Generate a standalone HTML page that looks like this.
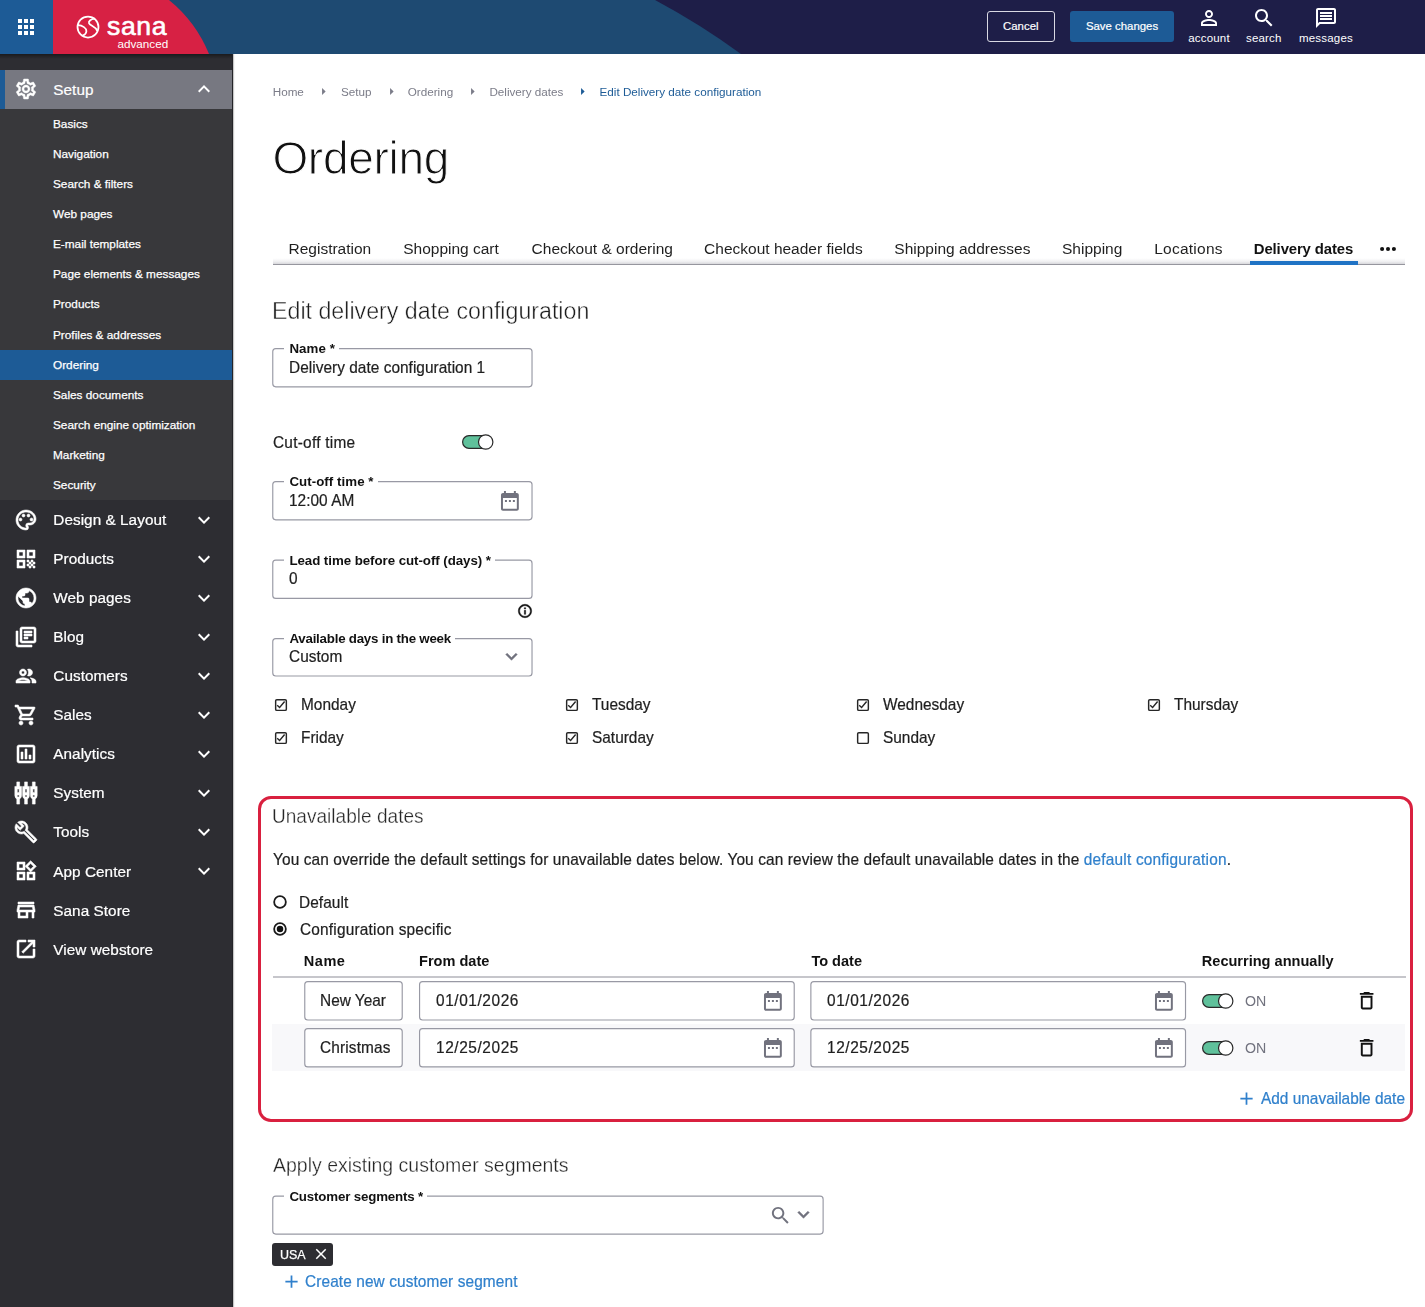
<!DOCTYPE html>
<html lang="en"><head><meta charset="utf-8"><title>Ordering - Edit Delivery date configuration</title>
<style>
*{box-sizing:border-box;margin:0;padding:0}
html,body{width:1425px;height:1307px;overflow:hidden;background:#fff}
body{position:relative;font-family:"Liberation Sans",sans-serif;color:#1f1f1f;font-size:15.4px}
.a,.t,.i{position:absolute}
.t{white-space:nowrap;line-height:20px;display:block}
.lg{position:absolute;background:#fff}
.i{display:block}
a{text-decoration:none;color:inherit}
ul{list-style:none}
button{font-family:inherit;background:none;border:0;color:inherit}
h1,h2,h3{font-weight:400}
header{position:absolute;left:0;top:0;width:1425px;height:54px;overflow:hidden}
nav.side{position:absolute;left:0;top:54px;width:233px;height:1253px}
.sbg{position:absolute;left:0;top:0;width:233px;height:1253px;background:linear-gradient(rgba(0,0,0,.42),rgba(0,0,0,0) 5px),#2d2d32;border-right:1px solid #242428;box-shadow:1px 0 1px rgba(0,0,0,.22)}
main{position:absolute;left:0;top:0;width:1425px;height:1307px}
main,nav.side,header{will-change:opacity}
</style></head>
<body>
<main>
<nav class="crumbs">
<a class="t" style="top:85px;font-size:11.7px;line-height:13px;left:272.7px;color:#7b7c88;" href="#">Home</a>
<svg class="i" viewBox="0 0 24 24" style="left:315.1px;top:83.2px;width:17px;height:17px;fill:#7b7c88;"><path d="M10 17l5-5-5-5v10z"/></svg>
<a class="t" style="top:85px;font-size:11.7px;line-height:13px;left:340.9px;color:#7b7c88;" href="#">Setup</a>
<svg class="i" viewBox="0 0 24 24" style="left:382.5px;top:83.2px;width:17px;height:17px;fill:#7b7c88;"><path d="M10 17l5-5-5-5v10z"/></svg>
<a class="t" style="top:85px;font-size:11.7px;line-height:13px;left:407.7px;color:#7b7c88;" href="#">Ordering</a>
<svg class="i" viewBox="0 0 24 24" style="left:463.9px;top:83.2px;width:17px;height:17px;fill:#7b7c88;"><path d="M10 17l5-5-5-5v10z"/></svg>
<a class="t" style="top:85px;font-size:11.7px;line-height:13px;left:489.4px;color:#7b7c88;" href="#">Delivery dates</a>
<svg class="i" viewBox="0 0 24 24" style="left:573.5px;top:83.2px;width:17px;height:17px;fill:#1d5b96;"><path d="M10 17l5-5-5-5v10z"/></svg>
<span class="t" style="top:85px;font-size:11.7px;line-height:13px;left:599.5px;color:#1d5b96;">Edit Delivery date configuration</span>
</nav>
<h1 class="t" style="top:132px;font-size:46px;line-height:52px;left:272.4px;color:#111;letter-spacing:-0.3px;-webkit-text-stroke:1.050px #fff;">Ordering</h1>
<div class="a" style="left:272.5px;top:232px;width:1132.5px;height:32.6px;border-bottom:1px solid #96969e;background:linear-gradient(#fff 0,#fff 82%,#f0f0f2 92%,#d8d8dc 100%)"></div>
<a class="t" style="top:240px;font-size:15.5px;line-height:17px;left:288.5px;color:#1f1f1f;" href="#">Registration</a>
<a class="t" style="top:240px;font-size:15.5px;line-height:17px;left:403.2px;color:#1f1f1f;" href="#">Shopping cart</a>
<a class="t" style="top:240px;font-size:15.5px;line-height:17px;left:531.6px;color:#1f1f1f;" href="#">Checkout &amp; ordering</a>
<a class="t" style="top:240px;font-size:15.5px;line-height:17px;left:704.1px;color:#1f1f1f;" href="#">Checkout header fields</a>
<a class="t" style="top:240px;font-size:15.5px;line-height:17px;left:894.3px;color:#1f1f1f;" href="#">Shipping addresses</a>
<a class="t" style="top:240px;font-size:15.5px;line-height:17px;left:1062px;color:#1f1f1f;" href="#">Shipping</a>
<a class="t" style="top:240px;font-size:15.5px;line-height:17px;left:1154.2px;color:#1f1f1f;letter-spacing:0.25px;" href="#">Locations</a>
<a class="t" style="top:241px;font-size:14.9px;line-height:16px;left:1253.8px;color:#111;font-weight:700;letter-spacing:-0.12px;" href="#">Delivery dates</a>
<div class="a" style="left:1250.3px;top:260.5px;width:107.6px;height:4px;background:#2073c5"></div>
<svg class="a" style="left:1377.500px;top:244.800px" width="20" height="8" viewBox="0 0 20 8" fill="#111"><circle cx="4.100" cy="4" r="2.050"/><circle cx="10" cy="4" r="2.050"/><circle cx="15.900" cy="4" r="2.050"/></svg>
<h2 class="t" style="top:297px;font-size:24.7px;line-height:27px;left:271.5px;color:#1c1c1c;transform:scaleX(0.94);transform-origin:0 0;-webkit-text-stroke:.45px #fff;">Edit delivery date configuration</h2>
<svg class="a fld" style="left:271px;top:347px" width="263" height="42"><rect x="1.77" y="1.57" width="259.25" height="38.25" rx="3" fill="#fff" stroke="#9899a4" stroke-width="1.15"/></svg>
<div class="lg" style="left:284.2px;top:346px;width:55px;height:6px;"></div>
<label class="t" style="top:341px;font-size:13.3px;line-height:15px;left:289.4px;color:#111;font-weight:700;letter-spacing:0.07px;">Name *</label>
<span class="t" style="top:359px;font-size:15.9px;line-height:17px;left:289.2px;color:#1f1f1f;letter-spacing:0.03px;transform:scaleX(0.97);transform-origin:0 0;-webkit-text-stroke:.22px;">Delivery date configuration 1</span>
<span class="t" style="top:434px;font-size:15.9px;line-height:17px;left:272.6px;color:#1f1f1f;letter-spacing:0.25px;transform:scaleX(0.97);transform-origin:0 0;-webkit-text-stroke:.22px;">Cut-off time</span>
<svg class="a" style="left:461px;top:433px" width="34" height="18" viewBox="0 0 34 18" stroke="#2a2a2a" stroke-width="1.200"><rect x="1.600" y="2.600" width="28.500" height="12.800" rx="6.400" fill="#5fc19b"/><circle cx="24.700" cy="9" r="7.200" fill="#fff"/></svg>
<svg class="a fld" style="left:271px;top:480px" width="263" height="42"><rect x="1.77" y="1.57" width="259.25" height="38.25" rx="3" fill="#fff" stroke="#9899a4" stroke-width="1.15"/></svg>
<div class="lg" style="left:284.2px;top:479px;width:93.5px;height:6px;"></div>
<label class="t" style="top:474px;font-size:13.3px;line-height:15px;left:289.4px;color:#111;font-weight:700;letter-spacing:0.05px;">Cut-off time *</label>
<span class="t" style="top:492px;font-size:15.9px;line-height:17px;left:289.2px;color:#1f1f1f;letter-spacing:0.03px;transform:scaleX(0.97);transform-origin:0 0;-webkit-text-stroke:.22px;">12:00 AM</span>
<svg class="i" viewBox="0 0 24 24" style="left:497.8px;top:489.1px;width:23.8px;height:23.8px;fill:#71727e;"><path d="M9 11H7v2h2v-2zm4 0h-2v2h2v-2zm4 0h-2v2h2v-2zm2-7h-1V2h-2v2H8V2H6v2H5c-1.110 0-1.990.900-1.990 2L3 20c0 1.100.890 2 2 2h14c1.100 0 2-.900 2-2V6c0-1.100-.900-2-2-2zm0 16H5V9h14v11z"/></svg>
<svg class="a fld" style="left:271px;top:558px" width="263" height="42"><rect x="1.77" y="2.18" width="259.25" height="38.25" rx="3" fill="#fff" stroke="#9899a4" stroke-width="1.15"/></svg>
<div class="lg" style="left:284.2px;top:557.6px;width:211px;height:6px;"></div>
<label class="t" style="top:553px;font-size:13.3px;line-height:15px;left:289.4px;color:#111;font-weight:700;letter-spacing:-0.05px;">Lead time before cut-off (days) *</label>
<span class="t" style="top:570px;font-size:15.9px;line-height:17px;left:289.2px;color:#1f1f1f;letter-spacing:0.03px;transform:scaleX(0.97);transform-origin:0 0;-webkit-text-stroke:.22px;">0</span>
<svg class="i" viewBox="0 0 24 24" style="left:516.8px;top:603px;width:16px;height:16px;fill:#111;stroke:#111;stroke-width:.7;"><path d="M11 7h2v2h-2zm0 4h2v6h-2zm1-9C6.480 2 2 6.480 2 12s4.480 10 10 10 10-4.480 10-10S17.520 2 12 2zm0 18c-4.410 0-8-3.590-8-8s3.590-8 8-8 8 3.590 8 8-3.590 8-8 8z"/></svg>
<svg class="a fld" style="left:271px;top:637px" width="263" height="41"><rect x="1.77" y="1.57" width="259.25" height="37.45" rx="3" fill="#fff" stroke="#9899a4" stroke-width="1.15"/></svg>
<div class="lg" style="left:284.2px;top:636px;width:171px;height:6px;"></div>
<label class="t" style="top:631px;font-size:13.3px;line-height:15px;left:289.4px;color:#111;font-weight:700;letter-spacing:-0.22px;">Available days in the week</label>
<span class="t" style="top:648px;font-size:15.9px;line-height:17px;left:289.2px;color:#1f1f1f;letter-spacing:0.03px;transform:scaleX(0.97);transform-origin:0 0;-webkit-text-stroke:.22px;">Custom</span>
<svg class="i" viewBox="0 0 24 24" style="left:499.8px;top:644.9px;width:23px;height:23px;fill:#71727e;stroke:#71727e;stroke-width:.5;"><path d="M16.59 8.59L12 13.17 7.41 8.59 6 10l6 6 6-6z"/></svg>
<svg class="a" style="left:274px;top:697.5px" width="14" height="14" viewBox="0 0 14 14" fill="none" stroke="#262626"><rect x="1.650" y="1.650" width="10.700" height="10.700" rx="1.200" stroke-width="1.450" fill="#fff"/><path d="M3.200 7.200l2.400 2.200 5-5.900" stroke-width="1.400"/></svg>
<label class="t" style="top:696px;font-size:15.9px;line-height:17px;left:300.9px;color:#1f1f1f;transform:scaleX(0.97);transform-origin:0 0;-webkit-text-stroke:.22px;">Monday</label>
<svg class="a" style="left:565.05px;top:697.5px" width="14" height="14" viewBox="0 0 14 14" fill="none" stroke="#262626"><rect x="1.650" y="1.650" width="10.700" height="10.700" rx="1.200" stroke-width="1.450" fill="#fff"/><path d="M3.200 7.200l2.400 2.200 5-5.900" stroke-width="1.400"/></svg>
<label class="t" style="top:696px;font-size:15.9px;line-height:17px;left:591.95px;color:#1f1f1f;transform:scaleX(0.97);transform-origin:0 0;-webkit-text-stroke:.22px;">Tuesday</label>
<svg class="a" style="left:856.1px;top:697.5px" width="14" height="14" viewBox="0 0 14 14" fill="none" stroke="#262626"><rect x="1.650" y="1.650" width="10.700" height="10.700" rx="1.200" stroke-width="1.450" fill="#fff"/><path d="M3.200 7.200l2.400 2.200 5-5.900" stroke-width="1.400"/></svg>
<label class="t" style="top:696px;font-size:15.9px;line-height:17px;left:883px;color:#1f1f1f;transform:scaleX(0.97);transform-origin:0 0;-webkit-text-stroke:.22px;">Wednesday</label>
<svg class="a" style="left:1147.15px;top:697.5px" width="14" height="14" viewBox="0 0 14 14" fill="none" stroke="#262626"><rect x="1.650" y="1.650" width="10.700" height="10.700" rx="1.200" stroke-width="1.450" fill="#fff"/><path d="M3.200 7.200l2.400 2.200 5-5.900" stroke-width="1.400"/></svg>
<label class="t" style="top:696px;font-size:15.9px;line-height:17px;left:1174.05px;color:#1f1f1f;transform:scaleX(0.97);transform-origin:0 0;-webkit-text-stroke:.22px;">Thursday</label>
<svg class="a" style="left:274px;top:730.6px" width="14" height="14" viewBox="0 0 14 14" fill="none" stroke="#262626"><rect x="1.650" y="1.650" width="10.700" height="10.700" rx="1.200" stroke-width="1.450" fill="#fff"/><path d="M3.200 7.200l2.400 2.200 5-5.900" stroke-width="1.400"/></svg>
<label class="t" style="top:729px;font-size:15.9px;line-height:17px;left:300.9px;color:#1f1f1f;transform:scaleX(0.97);transform-origin:0 0;-webkit-text-stroke:.22px;">Friday</label>
<svg class="a" style="left:565.05px;top:730.6px" width="14" height="14" viewBox="0 0 14 14" fill="none" stroke="#262626"><rect x="1.650" y="1.650" width="10.700" height="10.700" rx="1.200" stroke-width="1.450" fill="#fff"/><path d="M3.200 7.200l2.400 2.200 5-5.900" stroke-width="1.400"/></svg>
<label class="t" style="top:729px;font-size:15.9px;line-height:17px;left:591.95px;color:#1f1f1f;transform:scaleX(0.97);transform-origin:0 0;-webkit-text-stroke:.22px;">Saturday</label>
<svg class="a" style="left:856.1px;top:730.6px" width="14" height="14" viewBox="0 0 14 14" fill="none" stroke="#262626"><rect x="1.650" y="1.650" width="10.700" height="10.700" rx="1.200" stroke-width="1.450" fill="#fff"/></svg>
<label class="t" style="top:729px;font-size:15.9px;line-height:17px;left:883px;color:#1f1f1f;transform:scaleX(0.97);transform-origin:0 0;-webkit-text-stroke:.22px;">Sunday</label>
<div class="a" style="left:258px;top:795.5px;width:1155px;height:326px;border:3px solid #d9203f;border-radius:13px"></div>
<h3 class="t" style="top:804px;font-size:20.5px;line-height:23px;left:272.2px;color:#262626;transform:scaleX(0.93);transform-origin:0 0;-webkit-text-stroke:.32px #fff;">Unavailable dates</h3>
<p class="t" style="top:851px;font-size:15.9px;line-height:17px;left:272.8px;color:#1f1f1f;letter-spacing:0.11px;transform:scaleX(0.97);transform-origin:0 0;-webkit-text-stroke:.22px;">You can override the default settings for unavailable dates below. You can review the default unavailable dates in the <a href="#" style="color:#3080cc;letter-spacing:.2px">default configuration</a>.</p>
<svg class="a" style="left:272.35px;top:894.05px" width="16" height="16" viewBox="0 0 16 16" fill="#fff" stroke="#1a1a1a" stroke-width="1.800"><circle cx="8" cy="8" r="5.850"/></svg>
<label class="t" style="top:894px;font-size:15.9px;line-height:17px;left:299.3px;color:#1f1f1f;letter-spacing:0.08px;transform:scaleX(0.97);transform-origin:0 0;-webkit-text-stroke:.22px;">Default</label>
<svg class="a" style="left:272.35px;top:921.3px" width="16" height="16" viewBox="0 0 16 16" fill="#fff" stroke="#1a1a1a" stroke-width="1.800"><circle cx="8" cy="8" r="5.850"/><circle cx="8" cy="8" r="3.250" fill="#111" stroke="none"/></svg>
<label class="t" style="top:921px;font-size:15.9px;line-height:17px;left:300px;color:#1f1f1f;letter-spacing:0.2px;transform:scaleX(0.97);transform-origin:0 0;-webkit-text-stroke:.22px;">Configuration specific</label>
<span class="t" style="top:953px;font-size:14.55px;line-height:16px;left:303.8px;color:#111;font-weight:700;letter-spacing:0.5px;">Name</span>
<span class="t" style="top:953px;font-size:14.55px;line-height:16px;left:419px;color:#111;font-weight:700;">From date</span>
<span class="t" style="top:953px;font-size:14.55px;line-height:16px;left:811.4px;color:#111;font-weight:700;">To date</span>
<span class="t" style="top:953px;font-size:14.55px;line-height:16px;left:1201.8px;color:#111;font-weight:700;">Recurring annually</span>
<div class="a" style="left:272.5px;top:976px;width:1133px;height:2px;background:#c6c6cb"></div>
<div class="a" style="left:272.4px;top:1024px;width:1133px;height:47px;background:#f8f8fa"></div>
<svg class="a fld" style="left:303px;top:980px" width="101" height="42"><rect x="1.77" y="1.57" width="97.45" height="38.45" rx="3" fill="#fff" stroke="#9899a4" stroke-width="1.15"/></svg>
<span class="t" style="top:992px;font-size:15.9px;line-height:17px;left:320.3px;color:#1f1f1f;transform:scaleX(0.97);transform-origin:0 0;-webkit-text-stroke:.22px;">New Year</span>
<svg class="a fld" style="left:418px;top:980px" width="378" height="42"><rect x="1.57" y="1.57" width="374.65" height="38.45" rx="3" fill="#fff" stroke="#9899a4" stroke-width="1.15"/></svg>
<span class="t" style="top:992px;font-size:15.9px;line-height:17px;left:435.6px;color:#1f1f1f;letter-spacing:0.6px;transform:scaleX(0.97);transform-origin:0 0;-webkit-text-stroke:.22px;">01/01/2026</span>
<svg class="i" viewBox="0 0 24 24" style="left:761px;top:989px;width:23.8px;height:23.8px;fill:#71727e;"><path d="M9 11H7v2h2v-2zm4 0h-2v2h2v-2zm4 0h-2v2h2v-2zm2-7h-1V2h-2v2H8V2H6v2H5c-1.110 0-1.990.900-1.990 2L3 20c0 1.100.890 2 2 2h14c1.100 0 2-.900 2-2V6c0-1.100-.900-2-2-2zm0 16H5V9h14v11z"/></svg>
<svg class="a fld" style="left:809px;top:980px" width="379" height="42"><rect x="1.87" y="1.57" width="374.65" height="38.45" rx="3" fill="#fff" stroke="#9899a4" stroke-width="1.15"/></svg>
<span class="t" style="top:992px;font-size:15.9px;line-height:17px;left:826.9px;color:#1f1f1f;letter-spacing:0.6px;transform:scaleX(0.97);transform-origin:0 0;-webkit-text-stroke:.22px;">01/01/2026</span>
<svg class="i" viewBox="0 0 24 24" style="left:1152.3px;top:989px;width:23.8px;height:23.8px;fill:#71727e;"><path d="M9 11H7v2h2v-2zm4 0h-2v2h2v-2zm4 0h-2v2h2v-2zm2-7h-1V2h-2v2H8V2H6v2H5c-1.110 0-1.990.900-1.990 2L3 20c0 1.100.890 2 2 2h14c1.100 0 2-.900 2-2V6c0-1.100-.900-2-2-2zm0 16H5V9h14v11z"/></svg>
<svg class="a" style="left:1200.9px;top:992px" width="34" height="18" viewBox="0 0 34 18" stroke="#2a2a2a" stroke-width="1.200"><rect x="1.600" y="2.600" width="28.500" height="12.800" rx="6.400" fill="#5fc19b"/><circle cx="24.700" cy="9" r="7.200" fill="#fff"/></svg>
<span class="t" style="top:993px;font-size:14.2px;line-height:16px;left:1244.9px;color:#71727e;">ON</span>
<svg class="i" viewBox="0 0 24 24" style="left:1354.95px;top:988.65px;width:23.3px;height:23.3px;fill:#111;"><path d="M6 19c0 1.100.900 2 2 2h8c1.100 0 2-.900 2-2V7H6v12zM8 9h8v10H8V9zm7.500-5l-1-1h-5l-1 1H5v2h14V4z"/></svg>
<svg class="a fld" style="left:303px;top:1027px" width="101" height="42"><rect x="1.77" y="1.57" width="97.45" height="38.35" rx="3" fill="#fff" stroke="#9899a4" stroke-width="1.15"/></svg>
<span class="t" style="top:1039px;font-size:15.9px;line-height:17px;left:320.3px;color:#1f1f1f;letter-spacing:0.14px;transform:scaleX(0.97);transform-origin:0 0;-webkit-text-stroke:.22px;">Christmas</span>
<svg class="a fld" style="left:418px;top:1027px" width="378" height="42"><rect x="1.57" y="1.57" width="374.65" height="38.35" rx="3" fill="#fff" stroke="#9899a4" stroke-width="1.15"/></svg>
<span class="t" style="top:1039px;font-size:15.9px;line-height:17px;left:435.6px;color:#1f1f1f;letter-spacing:0.6px;transform:scaleX(0.97);transform-origin:0 0;-webkit-text-stroke:.22px;">12/25/2025</span>
<svg class="i" viewBox="0 0 24 24" style="left:761px;top:1036px;width:23.8px;height:23.8px;fill:#71727e;"><path d="M9 11H7v2h2v-2zm4 0h-2v2h2v-2zm4 0h-2v2h2v-2zm2-7h-1V2h-2v2H8V2H6v2H5c-1.110 0-1.990.900-1.990 2L3 20c0 1.100.890 2 2 2h14c1.100 0 2-.900 2-2V6c0-1.100-.900-2-2-2zm0 16H5V9h14v11z"/></svg>
<svg class="a fld" style="left:809px;top:1027px" width="379" height="42"><rect x="1.87" y="1.57" width="374.65" height="38.35" rx="3" fill="#fff" stroke="#9899a4" stroke-width="1.15"/></svg>
<span class="t" style="top:1039px;font-size:15.9px;line-height:17px;left:826.9px;color:#1f1f1f;letter-spacing:0.6px;transform:scaleX(0.97);transform-origin:0 0;-webkit-text-stroke:.22px;">12/25/2025</span>
<svg class="i" viewBox="0 0 24 24" style="left:1152.3px;top:1036px;width:23.8px;height:23.8px;fill:#71727e;"><path d="M9 11H7v2h2v-2zm4 0h-2v2h2v-2zm4 0h-2v2h2v-2zm2-7h-1V2h-2v2H8V2H6v2H5c-1.110 0-1.990.900-1.990 2L3 20c0 1.100.890 2 2 2h14c1.100 0 2-.900 2-2V6c0-1.100-.900-2-2-2zm0 16H5V9h14v11z"/></svg>
<svg class="a" style="left:1200.9px;top:1039px" width="34" height="18" viewBox="0 0 34 18" stroke="#2a2a2a" stroke-width="1.200"><rect x="1.600" y="2.600" width="28.500" height="12.800" rx="6.400" fill="#5fc19b"/><circle cx="24.700" cy="9" r="7.200" fill="#fff"/></svg>
<span class="t" style="top:1040px;font-size:14.2px;line-height:16px;left:1244.9px;color:#71727e;">ON</span>
<svg class="i" viewBox="0 0 24 24" style="left:1354.95px;top:1035.65px;width:23.3px;height:23.3px;fill:#111;"><path d="M6 19c0 1.100.900 2 2 2h8c1.100 0 2-.900 2-2V7H6v12zM8 9h8v10H8V9zm7.500-5l-1-1h-5l-1 1H5v2h14V4z"/></svg>
<svg class="i" viewBox="0 0 24 24" style="left:1236.1px;top:1088.3px;width:21px;height:21px;fill:#3080cc;"><path d="M19 13h-6v6h-2v-6H5v-2h6V5h2v6h6v2z"/></svg>
<a class="t" style="top:1090px;font-size:15.9px;line-height:17px;left:1261px;color:#3080cc;transform:scaleX(0.97);transform-origin:0 0;-webkit-text-stroke:.22px;" href="#">Add unavailable date</a>
<h3 class="t" style="top:1153px;font-size:20.5px;line-height:23px;left:273px;color:#262626;transform:scaleX(0.95);transform-origin:0 0;-webkit-text-stroke:.32px #fff;">Apply existing customer segments</h3>
<svg class="a fld" style="left:271px;top:1194px" width="554" height="42"><rect x="1.77" y="2.17" width="550.35" height="37.95" rx="3" fill="#fff" stroke="#9899a4" stroke-width="1.15"/></svg>
<div class="lg" style="left:284.2px;top:1193.6px;width:143px;height:6px;"></div>
<label class="t" style="top:1189px;font-size:13.3px;line-height:15px;left:289.4px;color:#111;font-weight:700;letter-spacing:-0.16px;">Customer segments *</label>
<svg class="i" viewBox="0 0 24 24" style="left:769.3px;top:1204px;width:23px;height:23px;fill:#71727e;"><path d="M15.5 14h-.79l-.28-.27C15.41 12.59 16 11.11 16 9.5 16 5.91 13.09 3 9.5 3S3 5.91 3 9.5 5.91 16 9.5 16c1.61 0 3.09-.59 4.23-1.57l.27.28v.79l5 4.99L20.49 19l-4.99-5zm-6 0C7.01 14 5 11.99 5 9.5S7.01 5 9.5 5 14 7.01 14 9.5 11.99 14 9.5 14z"/></svg>
<svg class="i" viewBox="0 0 24 24" style="left:791.6px;top:1202.7px;width:23px;height:23px;fill:#71727e;stroke:#71727e;stroke-width:.5;"><path d="M16.59 8.59L12 13.17 7.41 8.59 6 10l6 6 6-6z"/></svg>
<div class="a" style="left:272.2px;top:1242.5px;width:60.8px;height:23.4px;background:#2d2d32;border-radius:3px"></div>
<span class="t" style="top:1248px;font-size:12.5px;line-height:14px;left:279.9px;color:#fff;-webkit-text-stroke:.25px #fff;">USA</span>
<svg class="i" viewBox="0 0 24 24" style="left:312px;top:1245.3px;width:18px;height:18px;fill:#fff;"><path d="M19 6.410L17.590 5 12 10.590 6.410 5 5 6.410 10.590 12 5 17.590 6.410 19 12 13.410 17.590 19 19 17.590 13.410 12z"/></svg>
<svg class="i" viewBox="0 0 24 24" style="left:280.5px;top:1271.2px;width:21px;height:21px;fill:#3080cc;"><path d="M19 13h-6v6h-2v-6H5v-2h6V5h2v6h6v2z"/></svg>
<a class="t" style="top:1273px;font-size:15.9px;line-height:17px;left:304.6px;color:#3080cc;letter-spacing:0.1px;transform:scaleX(0.97);transform-origin:0 0;-webkit-text-stroke:.22px;" href="#">Create new customer segment</a>
</main>
<nav class="side">
<div class="sbg"></div>
<div class="a" style="left:0px;top:55px;width:232px;height:391px;background:#38383b"></div>
<div class="a" style="left:0px;top:16px;width:232px;height:39px;background:#777881;border-left:5px solid #1d5b96"></div>
<svg class="i" viewBox="0 0 24 24" style="left:14px;top:23px;width:24px;height:24px;fill:#fff;stroke:#fff;stroke-width:.45;"><path d="M19.43 12.98c.04-.32.07-.64.07-.98 0-.34-.03-.66-.07-.98l2.11-1.65c.19-.15.24-.42.12-.64l-2-3.46c-.09-.16-.26-.25-.44-.25-.06 0-.12.01-.17.03l-2.49 1c-.52-.4-1.08-.73-1.69-.98l-.38-2.65C14.46 2.18 14.25 2 14 2h-4c-.25 0-.46.18-.49.42l-.38 2.65c-.61.25-1.17.59-1.69.98l-2.49-1c-.06-.02-.12-.03-.18-.03-.17 0-.34.09-.43.25l-2 3.46c-.13.22-.07.49.12.64l2.11 1.65c-.04.32-.07.65-.07.98 0 .33.03.66.07.98l-2.11 1.65c-.19.15-.24.42-.12.64l2 3.46c.09.16.26.25.44.25.06 0 .12-.01.17-.03l2.49-1c.52.4 1.08.73 1.69.98l.38 2.65c.03.24.24.42.49.42h4c.25 0 .46-.18.49-.42l.38-2.65c.61-.25 1.17-.59 1.69-.98l2.49 1c.06.02.12.03.18.03.17 0 .34-.09.43-.25l2-3.46c.12-.22.07-.49-.12-.64l-2.11-1.65zm-1.98-1.71c.04.31.05.52.05.73 0 .21-.02.43-.05.73l-.14 1.13.89.7 1.08.84-.7 1.21-1.27-.51-1.04-.42-.9.68c-.43.32-.84.56-1.25.73l-1.06.43-.16 1.13-.2 1.35h-1.4l-.19-1.35-.16-1.13-1.06-.43c-.43-.18-.83-.41-1.23-.71l-.91-.7-1.06.43-1.27.51-.7-1.21 1.08-.84.89-.7-.14-1.13c-.03-.31-.05-.54-.05-.74s.02-.43.05-.73l.14-1.13-.89-.7-1.08-.84.7-1.21 1.27.51 1.04.42.9-.68c.43-.32.84-.56 1.25-.73l1.06-.43.16-1.13.2-1.35h1.39l.19 1.35.16 1.13 1.06.43c.43.18.83.41 1.23.71l.91.7 1.06-.43 1.27-.51.7 1.21-1.07.85-.89.7.14 1.13zM12 8c-2.210 0-4 1.790-4 4s1.790 4 4 4 4-1.790 4-4-1.790-4-4-4zm0 6c-1.100 0-2-.900-2-2s.900-2 2-2 2 .900 2 2-.900 2-2 2z"/></svg>
<span class="t" style="top:27px;font-size:15.3px;line-height:17px;left:53.3px;color:#fff;letter-spacing:0.05px;-webkit-text-stroke:.22px #fff;">Setup</span>
<svg class="i" viewBox="0 0 24 24" style="left:191.5px;top:22.7px;width:24px;height:24px;fill:#fff;"><path d="M12 8l-6 6 1.41 1.41L12 10.83l4.59 4.58L18 14z"/></svg>
<div class="a" style="left:0px;top:296px;width:232px;height:30px;background:#1d5b96"></div>
<ul>
<li class="t" style="top:63px;font-size:11.8px;line-height:14px;left:53px;color:#fff;-webkit-text-stroke:.25px #fff;">Basics</li>
<li class="t" style="top:93px;font-size:11.8px;line-height:14px;left:53px;color:#fff;-webkit-text-stroke:.25px #fff;">Navigation</li>
<li class="t" style="top:123px;font-size:11.8px;line-height:14px;left:53px;color:#fff;-webkit-text-stroke:.25px #fff;">Search &amp; filters</li>
<li class="t" style="top:153px;font-size:11.8px;line-height:14px;left:53px;color:#fff;-webkit-text-stroke:.25px #fff;">Web pages</li>
<li class="t" style="top:183px;font-size:11.8px;line-height:14px;left:53px;color:#fff;-webkit-text-stroke:.25px #fff;">E-mail templates</li>
<li class="t" style="top:213px;font-size:11.8px;line-height:14px;left:53px;color:#fff;-webkit-text-stroke:.25px #fff;">Page elements &amp; messages</li>
<li class="t" style="top:243px;font-size:11.8px;line-height:14px;left:53px;color:#fff;-webkit-text-stroke:.25px #fff;">Products</li>
<li class="t" style="top:274px;font-size:11.8px;line-height:14px;left:53px;color:#fff;-webkit-text-stroke:.25px #fff;">Profiles &amp; addresses</li>
<li class="t" style="top:304px;font-size:11.8px;line-height:14px;left:53px;color:#fff;-webkit-text-stroke:.25px #fff;">Ordering</li>
<li class="t" style="top:334px;font-size:11.8px;line-height:14px;left:53px;color:#fff;-webkit-text-stroke:.25px #fff;">Sales documents</li>
<li class="t" style="top:364px;font-size:11.8px;line-height:14px;left:53px;color:#fff;-webkit-text-stroke:.25px #fff;">Search engine optimization</li>
<li class="t" style="top:394px;font-size:11.8px;line-height:14px;left:53px;color:#fff;-webkit-text-stroke:.25px #fff;">Marketing</li>
<li class="t" style="top:424px;font-size:11.8px;line-height:14px;left:53px;color:#fff;-webkit-text-stroke:.25px #fff;">Security</li>
</ul>
<div class="menu">
<svg class="i" viewBox="0 0 24 24" style="left:13.9px;top:453.6px;width:24px;height:24px;fill:#fff;stroke:#fff;stroke-width:.55;stroke-linejoin:round;"><path d="M12 22C6.49 22 2 17.51 2 12S6.49 2 12 2s10 4.04 10 9c0 3.31-2.69 6-6 6h-1.770c-.280 0-.500.220-.500.500 0 .120.050.230.130.330.410.470.640 1.060.640 1.670A2.500 2.500 0 0 1 12 22zm0-18c-4.410 0-8 3.590-8 8s3.590 8 8 8c.280 0 .500-.220.500-.500a.540.540 0 0 0-.140-.350c-.410-.460-.630-1.050-.630-1.650a2.500 2.500 0 0 1 2.500-2.500H16c2.210 0 4-1.790 4-4 0-3.860-3.590-7-8-7z"/><circle cx="6.5" cy="11.5" r="1.5"/><circle cx="9.5" cy="7.5" r="1.5"/><circle cx="14.5" cy="7.5" r="1.5"/><circle cx="17.5" cy="11.5" r="1.5"/></svg>
<a class="t" style="top:457px;font-size:15.3px;line-height:17px;left:53.3px;color:#fff;letter-spacing:0.05px;-webkit-text-stroke:.22px #fff;" href="#">Design &amp; Layout</a>
<svg class="i" viewBox="0 0 24 24" style="left:191.5px;top:453.9px;width:24px;height:24px;fill:#fff;"><path d="M16.59 8.59L12 13.17 7.41 8.59 6 10l6 6 6-6z"/></svg>
<svg class="i" viewBox="0 0 24 24" style="left:13.9px;top:492.66px;width:24px;height:24px;fill:#fff;stroke:#fff;stroke-width:.55;stroke-linejoin:round;"><path d="M3 11h8V3H3v8zm2-6h4v4H5V5zM3 21h8v-8H3v8zm2-6h4v4H5v-4zM13 3v8h8V3h-8zm6 6h-4V5h4v4zM19 19h2v2h-2zM13 13h2v2h-2zM15 15h2v2h-2zM13 17h2v2h-2zM15 19h2v2h-2zM17 17h2v2h-2zM17 13h2v2h-2zM19 15h2v2h-2z"/></svg>
<a class="t" style="top:496px;font-size:15.3px;line-height:17px;left:53.3px;color:#fff;letter-spacing:0.05px;-webkit-text-stroke:.22px #fff;" href="#">Products</a>
<svg class="i" viewBox="0 0 24 24" style="left:191.5px;top:492.96px;width:24px;height:24px;fill:#fff;"><path d="M16.59 8.59L12 13.17 7.41 8.59 6 10l6 6 6-6z"/></svg>
<svg class="i" viewBox="0 0 24 24" style="left:13.9px;top:531.72px;width:24px;height:24px;fill:#fff;stroke:#fff;stroke-width:.55;stroke-linejoin:round;"><path d="M12 2C6.48 2 2 6.48 2 12s4.48 10 10 10 10-4.48 10-10S17.52 2 12 2zm-1 17.930c-3.950-.490-7-3.850-7-7.930 0-.620.080-1.210.210-1.790L9 15v1c0 1.100.900 2 2 2v1.930zm6.900-2.540c-.260-.810-1-1.390-1.900-1.390h-1v-3c0-.550-.450-1-1-1H8v-2h2c.550 0 1-.450 1-1V7h2c1.100 0 2-.900 2-2v-.410c2.930 1.190 5 4.060 5 7.410 0 2.080-.800 3.970-2.100 5.390z"/></svg>
<a class="t" style="top:535px;font-size:15.3px;line-height:17px;left:53.3px;color:#fff;letter-spacing:0.05px;-webkit-text-stroke:.22px #fff;" href="#">Web pages</a>
<svg class="i" viewBox="0 0 24 24" style="left:191.5px;top:532.02px;width:24px;height:24px;fill:#fff;"><path d="M16.59 8.59L12 13.17 7.41 8.59 6 10l6 6 6-6z"/></svg>
<svg class="i" viewBox="0 0 24 24" style="left:13.9px;top:570.78px;width:24px;height:24px;fill:#fff;stroke:#fff;stroke-width:.55;stroke-linejoin:round;"><path d="M4 6H2v14c0 1.100.900 2 2 2h14v-2H4V6zm16-4H8c-1.100 0-2 .900-2 2v12c0 1.100.900 2 2 2h12c1.100 0 2-.900 2-2V4c0-1.100-.900-2-2-2zm0 14H8V4h12v12zM10 9h8v2h-8zm0 3h4v2h-4zm0-6h8v2h-8z"/></svg>
<a class="t" style="top:574px;font-size:15.3px;line-height:17px;left:53.3px;color:#fff;letter-spacing:0.05px;-webkit-text-stroke:.22px #fff;" href="#">Blog</a>
<svg class="i" viewBox="0 0 24 24" style="left:191.5px;top:571.08px;width:24px;height:24px;fill:#fff;"><path d="M16.59 8.59L12 13.17 7.41 8.59 6 10l6 6 6-6z"/></svg>
<svg class="i" viewBox="0 0 24 24" style="left:13.9px;top:609.84px;width:24px;height:24px;fill:#fff;stroke:#fff;stroke-width:.55;stroke-linejoin:round;"><path d="M9 13.750c-2.340 0-7 1.170-7 3.500V19h14v-1.750c0-2.330-4.660-3.500-7-3.500zM4.340 17c.840-.580 2.870-1.250 4.660-1.250s3.820.670 4.660 1.250H4.340zM9 12c1.930 0 3.500-1.570 3.500-3.500S10.930 5 9 5 5.500 6.570 5.500 8.500 7.070 12 9 12zm0-5c.830 0 1.500.670 1.500 1.500S9.830 10 9 10s-1.500-.670-1.500-1.500S8.170 7 9 7zm7.040 6.810c1.160.840 1.960 1.960 1.960 3.440V19h4v-1.750c0-2.020-3.500-3.170-5.960-3.440zM15 12c1.930 0 3.500-1.570 3.500-3.500S16.930 5 15 5c-.540 0-1.040.130-1.500.350.630.890 1 1.980 1 3.150s-.370 2.260-1 3.150c.460.220.960.350 1.500.350z"/></svg>
<a class="t" style="top:613px;font-size:15.3px;line-height:17px;left:53.3px;color:#fff;letter-spacing:0.05px;-webkit-text-stroke:.22px #fff;" href="#">Customers</a>
<svg class="i" viewBox="0 0 24 24" style="left:191.5px;top:610.14px;width:24px;height:24px;fill:#fff;"><path d="M16.59 8.59L12 13.17 7.41 8.59 6 10l6 6 6-6z"/></svg>
<svg class="i" viewBox="0 0 24 24" style="left:13.9px;top:648.9px;width:24px;height:24px;fill:#fff;stroke:#fff;stroke-width:.55;stroke-linejoin:round;"><path d="M15.550 13c.750 0 1.410-.410 1.750-1.030l3.580-6.490A.996.996 0 0 0 20.010 4H5.210l-.940-2H1v2h2l3.600 7.590-1.350 2.440C4.520 15.370 5.480 17 7 17h12v-2H7l1.100-2h7.450zM6.160 6h12.150l-2.760 5H8.530L6.160 6zM7 18c-1.100 0-1.990.900-1.990 2S5.900 22 7 22s2-.900 2-2-.900-2-2-2zm10 0c-1.100 0-1.990.900-1.990 2s.890 2 1.990 2 2-.900 2-2-.900-2-2-2z"/></svg>
<a class="t" style="top:652px;font-size:15.3px;line-height:17px;left:53.3px;color:#fff;letter-spacing:0.05px;-webkit-text-stroke:.22px #fff;" href="#">Sales</a>
<svg class="i" viewBox="0 0 24 24" style="left:191.5px;top:649.2px;width:24px;height:24px;fill:#fff;"><path d="M16.59 8.59L12 13.17 7.41 8.59 6 10l6 6 6-6z"/></svg>
<svg class="i" viewBox="0 0 24 24" style="left:13.9px;top:687.96px;width:24px;height:24px;fill:#fff;stroke:#fff;stroke-width:.55;stroke-linejoin:round;"><path d="M9 17H7v-7h2v7zm4 0h-2V7h2v10zm4 0h-2v-4h2v4zm2 2H5V5h14v14zm0-16H5c-1.100 0-2 .900-2 2v14c0 1.100.900 2 2 2h14c1.100 0 2-.900 2-2V5c0-1.100-.900-2-2-2z"/></svg>
<a class="t" style="top:691px;font-size:15.3px;line-height:17px;left:53.3px;color:#fff;letter-spacing:0.05px;-webkit-text-stroke:.22px #fff;" href="#">Analytics</a>
<svg class="i" viewBox="0 0 24 24" style="left:191.5px;top:688.26px;width:24px;height:24px;fill:#fff;"><path d="M16.59 8.59L12 13.17 7.41 8.59 6 10l6 6 6-6z"/></svg>
<svg class="i" viewBox="0 0 24 24" style="left:13.9px;top:727.02px;width:24px;height:24px;fill:#fff;stroke:#fff;stroke-width:.55;stroke-linejoin:round;"><path d="M2.80 .9h2.800v22.200h-2.800zM10.60 .9h2.800v22.200h-2.800zM18.40 .9h2.800v22.200h-2.800z"/><path d="M0.85 5.400h6.700v9.200a3.350 3.350 0 0 1-6.700 0zM8.65 5.400h6.700v9.200a3.350 3.350 0 0 1-6.700 0zM16.45 5.400h6.700v9.200a3.350 3.350 0 0 1-6.700 0z"/><path fill="#2d2d32" d="M3.30 8h1.800v3.500h-1.800zM3.30 13.900h1.800v2.200h-1.800zM11.10 8h1.800v3.500h-1.800zM11.10 13.900h1.800v2.200h-1.800zM18.90 8h1.800v3.500h-1.800zM18.90 13.900h1.800v2.200h-1.800z"/></svg>
<a class="t" style="top:730px;font-size:15.3px;line-height:17px;left:53.3px;color:#fff;letter-spacing:0.05px;-webkit-text-stroke:.22px #fff;" href="#">System</a>
<svg class="i" viewBox="0 0 24 24" style="left:191.5px;top:727.32px;width:24px;height:24px;fill:#fff;"><path d="M16.59 8.59L12 13.17 7.41 8.59 6 10l6 6 6-6z"/></svg>
<svg class="i" viewBox="0 0 24 24" style="left:13.9px;top:766.08px;width:24px;height:24px;fill:#fff;stroke:#fff;stroke-width:.55;stroke-linejoin:round;"><path d="M22.610 18.990l-9.080-9.080c.930-2.340.450-5.100-1.440-7C9.790.610 6.210.400 3.660 2.260L7.500 6.110 6.080 7.520 2.250 3.690C.390 6.230.600 9.820 2.900 12.110c1.860 1.860 4.570 2.350 6.890 1.480l9.110 9.110c.390.390 1.020.390 1.410 0l2.300-2.300c.400-.380.400-1.010 0-1.410zm-3 1.600l-9.460-9.460c-.610.450-1.290.720-2 .820-1.360.200-2.790-.210-3.830-1.250C3.370 9.760 2.930 8.500 3 7.260l3.090 3.090 4.240-4.240-3.090-3.090c1.240-.070 2.490.370 3.440 1.310 1.080 1.080 1.490 2.570 1.240 3.960-.120.710-.420 1.370-.880 1.960l9.450 9.450-.880.890z"/></svg>
<a class="t" style="top:769px;font-size:15.3px;line-height:17px;left:53.3px;color:#fff;letter-spacing:0.05px;-webkit-text-stroke:.22px #fff;" href="#">Tools</a>
<svg class="i" viewBox="0 0 24 24" style="left:191.5px;top:766.38px;width:24px;height:24px;fill:#fff;"><path d="M16.59 8.59L12 13.17 7.41 8.59 6 10l6 6 6-6z"/></svg>
<svg class="i" viewBox="0 0 24 24" style="left:13.9px;top:805.14px;width:24px;height:24px;fill:#fff;stroke:#fff;stroke-width:.55;stroke-linejoin:round;"><path d="M16.660 4.520l2.830 2.830-2.830 2.830-2.830-2.830 2.830-2.830M9 5v4H5V5h4m10 10v4h-4v-4h4M9 15v4H5v-4h4m7.660-13.310L11 7.340 16.660 13l5.660-5.660-5.660-5.650zM11 3H3v8h8V3zm10 10h-8v8h8v-8zm-10 0H3v8h8v-8z"/></svg>
<a class="t" style="top:809px;font-size:15.3px;line-height:17px;left:53.3px;color:#fff;letter-spacing:0.05px;-webkit-text-stroke:.22px #fff;" href="#">App Center</a>
<svg class="i" viewBox="0 0 24 24" style="left:191.5px;top:805.44px;width:24px;height:24px;fill:#fff;"><path d="M16.59 8.59L12 13.17 7.41 8.59 6 10l6 6 6-6z"/></svg>
<svg class="i" viewBox="0 0 24 24" style="left:13.9px;top:844.2px;width:24px;height:24px;fill:#fff;stroke:#fff;stroke-width:.55;stroke-linejoin:round;"><path d="M18.360 9l.600 3H5.040l.600-3h12.720M20 4H4v2h16V4zm0 3H4l-1 5v2h1v6h10v-6h4v6h2v-6h1v-2l-1-5zM6 18v-4h6v4H6z"/></svg>
<a class="t" style="top:848px;font-size:15.3px;line-height:17px;left:53.3px;color:#fff;letter-spacing:0.05px;-webkit-text-stroke:.22px #fff;" href="#">Sana Store</a>
<svg class="i" viewBox="0 0 24 24" style="left:13.9px;top:883.26px;width:24px;height:24px;fill:#fff;stroke:#fff;stroke-width:.55;stroke-linejoin:round;"><path d="M19 19H5V5h7V3H5c-1.110 0-2 .900-2 2v14c0 1.100.890 2 2 2h14c1.100 0 2-.900 2-2v-7h-2v7zM14 3v2h3.590l-9.830 9.830 1.410 1.410L19 6.410V10h2V3h-7z"/></svg>
<a class="t" style="top:887px;font-size:15.3px;line-height:17px;left:53.3px;color:#fff;letter-spacing:0.05px;-webkit-text-stroke:.22px #fff;" href="#">View webstore</a>
</div>
</nav>
<header>
<div class="a" style="left:0px;top:0px;width:1425px;height:54px;background:#1e1e48"></div>
<svg class="a" style="left:0;top:0" width="760" height="54" viewBox="0 0 760 54"><path fill="#1e4a72" d="M0 0H655Q700 24 741 54H0z"/><path fill="#d72144" d="M53 0H169Q196 22 209 54H53z"/><rect fill="#1d5b96" width="53" height="54"/></svg>
<svg class="i" viewBox="0 0 24 24" style="left:14px;top:14.7px;width:24px;height:24px;fill:#fff;"><path d="M4 8h4V4H4v4zm6 12h4v-4h-4v4zm-6 0h4v-4H4v4zm0-6h4v-4H4v4zm6 0h4v-4h-4v4zm6-10v4h4V4h-4zm-6 4h4V4h-4v4zm6 6h4v-4h-4v4zm0 6h4v-4h-4v4z"/></svg>
<svg class="a" style="left:76.1px;top:15.2px" width="24" height="24" viewBox="0 0 24 24" fill="none" stroke="#fff" stroke-width="1.75" stroke-linecap="round"><circle cx="12" cy="12" r="10.5"/><path d="M18.400 3.700C14.500 4.300 12.300 6.300 13 8.300C13.800 10.600 19.500 11.500 20.900 15.500"/><path d="M2 10.200C6.500 10.300 10.600 13.300 10.400 16.200C10.300 18.200 8.700 19.700 7.300 20.400"/></svg>
<span class="t" style="top:11px;font-size:26.6px;line-height:30px;left:107px;color:#fff;letter-spacing:0.6px;-webkit-text-stroke:.6px #fff;">sana</span>
<span class="t" style="top:37px;font-size:11.7px;line-height:13px;left:117.5px;color:#fff;">advanced</span>
<button class="a" style="left:987px;top:11px;width:68px;height:31px;border:1px solid #d9d9e3;border-radius:3px"></button>
<span class="t" style="top:20px;font-size:11.4px;line-height:12px;left:870.8px;width:300px;text-align:center;color:#fff;-webkit-text-stroke:.2px #fff;">Cancel</span>
<button class="a" style="left:1070px;top:11px;width:104px;height:31px;background:#1d5b96;border-radius:3px"></button>
<span class="t" style="top:20px;font-size:11.4px;line-height:12px;left:972px;width:300px;text-align:center;color:#fff;-webkit-text-stroke:.2px #fff;">Save changes</span>
<svg class="i" viewBox="0 0 24 24" style="left:1197.4px;top:6px;width:24px;height:24px;fill:#fff;"><path d="M12 5.9c1.16 0 2.1.94 2.1 2.1s-.94 2.1-2.1 2.1S9.9 9.16 9.9 8s.94-2.1 2.1-2.1m0 9c2.97 0 6.1 1.46 6.1 2.1v1.1H5.900V17c0-.64 3.130-2.1 6.100-2.1M12 4C9.790 4 8 5.790 8 8s1.790 4 4 4 4-1.790 4-4-1.790-4-4-4zm0 9c-2.670 0-8 1.340-8 4v3h16v-3c0-2.660-5.330-4-8-4z"/></svg>
<span class="t" style="top:32px;font-size:11.5px;line-height:12px;left:1059px;width:300px;text-align:center;color:#fff;letter-spacing:0.2px;">account</span>
<svg class="i" viewBox="0 0 24 24" style="left:1251.7px;top:5.8px;width:24px;height:24px;fill:#fff;"><path d="M15.5 14h-.79l-.28-.27C15.41 12.59 16 11.11 16 9.5 16 5.91 13.09 3 9.5 3S3 5.91 3 9.5 5.91 16 9.5 16c1.61 0 3.09-.59 4.23-1.57l.27.28v.79l5 4.99L20.49 19l-4.99-5zm-6 0C7.01 14 5 11.99 5 9.5S7.01 5 9.5 5 14 7.01 14 9.5 11.99 14 9.5 14z"/></svg>
<span class="t" style="top:32px;font-size:11.5px;line-height:12px;left:1113.8px;width:300px;text-align:center;color:#fff;letter-spacing:0.2px;">search</span>
<svg class="i" viewBox="0 0 24 24" style="left:1314px;top:6px;width:24px;height:24px;fill:#fff;"><path d="M4 4h16v12H5.17L4 17.17V4m0-2c-1.1 0-1.99.9-1.99 2L2 22l4-4h14c1.1 0 2-.9 2-2V4c0-1.1-.9-2-2-2H4zm2 10h12v2H6v-2zm0-3h12v2H6V9zm0-3h12v2H6V6z"/></svg>
<span class="t" style="top:32px;font-size:11.5px;line-height:12px;left:1176px;width:300px;text-align:center;color:#fff;letter-spacing:0.2px;">messages</span>
</header>
</body></html>
